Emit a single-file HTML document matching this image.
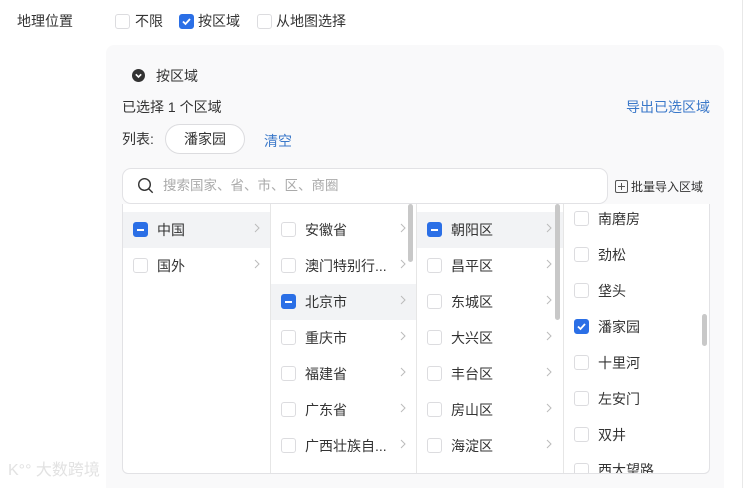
<!DOCTYPE html>
<html><head><meta charset="utf-8"><style>
*{box-sizing:border-box;margin:0;padding:0}
body{width:754px;height:488px;background:#fff;font-family:"Liberation Sans","Noto Sans CJK SC",sans-serif;font-size:14px;color:#333;position:relative;overflow:hidden}
.a{position:absolute;white-space:nowrap;line-height:18px}
.cb{position:absolute;width:15px;height:15px;border:1px solid #dcdcdf;border-radius:3px;background:#fff}
.cb.on{background:#2b6fe6;border-color:#2b6fe6}
.cb.ind{background:#2b6fe6;border-color:#2b6fe6}
.cb.ind::after{content:"";position:absolute;left:3px;top:6px;width:7px;height:2px;background:#fff}
.arr{position:absolute;width:6px;height:10px}
.hl{position:absolute;background:#f2f3f5}
.sb{position:absolute;width:5px;background:#c8c8c8;border-radius:3px}
</style></head><body>
<svg width="0" height="0" style="position:absolute"><defs><symbol id="ch" viewBox="0 0 6 10"><path d="M1 1l4 4-4 4" stroke="#bbb" stroke-width="1" fill="none"/></symbol></defs></svg>
<div class="a" style="left:17px;top:12px">地理位置</div>
<div class="cb" style="left:115px;top:14px"></div><div class="a" style="left:135px;top:12px">不限</div>
<div class="cb on" style="left:179px;top:14px"><svg width="13" height="13" viewBox="0 0 13 13" style="position:absolute;left:0;top:0"><path d="M3 6.5l2.5 2.5 4.5-5" stroke="#fff" stroke-width="1.8" fill="none"/></svg></div><div class="a" style="left:198px;top:12px">按区域</div>
<div class="cb" style="left:257px;top:14px"></div><div class="a" style="left:276px;top:12px">从地图选择</div>

<div class="a" style="left:106px;top:45px;width:618px;height:443px;background:#f9f9fa;border-radius:8px 8px 0 0"></div>
<div class="a" style="left:742px;top:0;width:1px;height:488px;background:#e8e8e8"></div>

<div class="a" style="left:132px;top:69px;width:13px;height:13px;border-radius:50%;background:#333"><svg width="13" height="13" style="position:absolute"><path d="M3.8 5.3l2.7 2.7 2.7-2.7" stroke="#fff" stroke-width="1.6" fill="none"/></svg></div>
<div class="a" style="left:156px;top:67px">按区域</div>
<div class="a" style="left:122px;top:98px">已选择 1 个区域</div>
<div class="a" style="left:626px;top:98px;color:#3a78c9">导出已选区域</div>
<div class="a" style="left:122px;top:130px">列表:</div>
<div class="a" style="left:165px;top:124px;width:80px;height:30px;border:1px solid #dcdcdf;border-radius:15px;background:#fff;text-align:center;line-height:28px">潘家园</div>
<div class="a" style="left:264px;top:132px;color:#3a78c9">清空</div>

<div class="a" style="left:122px;top:168px;width:486px;height:36px;border:1px solid #e2e2e5;border-radius:9px;background:#fff"></div>
<svg class="a" style="left:137px;top:177px" width="18" height="18"><circle cx="7.5" cy="7.5" r="5.8" stroke="#333" stroke-width="1.4" fill="none"/><path d="M11.7 11.7l4 4" stroke="#333" stroke-width="1.4"/></svg>
<div class="a" style="left:163px;top:177px;color:#aaa;font-size:13.5px">搜索国家、省、市、区、商圈</div>
<svg class="a" style="left:615px;top:180px" width="13" height="13"><rect x="0.5" y="0.5" width="12" height="12" rx="1.5" stroke="#555" fill="none"/><path d="M6.5 3v7M3 6.5h7" stroke="#555"/></svg>
<div class="a" style="left:631px;top:178px;font-size:12px">批量导入区域</div>

<div class="a" style="left:122px;top:204px;width:588px;height:270px;border:1px solid #e2e2e5;border-top:none;border-radius:0 0 6px 6px;background:#fff;overflow:hidden">
 <div class="a" style="left:147px;top:0;width:1px;height:270px;background:#e6e6e6"></div>
 <div class="a" style="left:293px;top:0;width:1px;height:270px;background:#e6e6e6"></div>
 <div class="a" style="left:440px;top:0;width:1px;height:270px;background:#e6e6e6"></div>
 <div class="hl" style="left:0;top:8px;width:147px;height:36px"></div>
 <div class="hl" style="left:148px;top:80px;width:145px;height:36px"></div>
 <div class="hl" style="left:294px;top:8px;width:146px;height:36px"></div>
</div>
<div class="sb" style="left:408px;top:204px;height:58px"></div>
<div class="sb" style="left:555px;top:204px;height:116px"></div>
<div class="sb" style="left:702px;top:314px;height:32px"></div>

<!-- col1 -->
<div class="cb ind" style="left:133px;top:222px"></div><div class="a" style="left:157px;top:221px">中国</div><svg class="arr" style="left:254px;top:223px"><use href="#ch"/></svg>
<div class="cb" style="left:133px;top:258px"></div><div class="a" style="left:157px;top:257px">国外</div><svg class="arr" style="left:254px;top:259px"><use href="#ch"/></svg>
<!-- col2 -->
<div class="cb" style="left:281px;top:222px"></div><div class="a" style="left:305px;top:221px">安徽省</div><svg class="arr" style="left:400px;top:223px"><use href="#ch"/></svg>
<div class="cb" style="left:281px;top:258px"></div><div class="a" style="left:305px;top:257px">澳门特别行...</div><svg class="arr" style="left:400px;top:259px"><use href="#ch"/></svg>
<div class="cb ind" style="left:281px;top:294px"></div><div class="a" style="left:305px;top:293px">北京市</div><svg class="arr" style="left:400px;top:295px"><use href="#ch"/></svg>
<div class="cb" style="left:281px;top:330px"></div><div class="a" style="left:305px;top:329px">重庆市</div><svg class="arr" style="left:400px;top:331px"><use href="#ch"/></svg>
<div class="cb" style="left:281px;top:366px"></div><div class="a" style="left:305px;top:365px">福建省</div><svg class="arr" style="left:400px;top:367px"><use href="#ch"/></svg>
<div class="cb" style="left:281px;top:402px"></div><div class="a" style="left:305px;top:401px">广东省</div><svg class="arr" style="left:400px;top:403px"><use href="#ch"/></svg>
<div class="cb" style="left:281px;top:438px"></div><div class="a" style="left:305px;top:437px">广西壮族自...</div><svg class="arr" style="left:400px;top:439px"><use href="#ch"/></svg>
<!-- col3 -->
<div class="cb ind" style="left:427px;top:222px"></div><div class="a" style="left:451px;top:221px">朝阳区</div><svg class="arr" style="left:546px;top:223px"><use href="#ch"/></svg>
<div class="cb" style="left:427px;top:258px"></div><div class="a" style="left:451px;top:257px">昌平区</div><svg class="arr" style="left:546px;top:259px"><use href="#ch"/></svg>
<div class="cb" style="left:427px;top:294px"></div><div class="a" style="left:451px;top:293px">东城区</div><svg class="arr" style="left:546px;top:295px"><use href="#ch"/></svg>
<div class="cb" style="left:427px;top:330px"></div><div class="a" style="left:451px;top:329px">大兴区</div><svg class="arr" style="left:546px;top:331px"><use href="#ch"/></svg>
<div class="cb" style="left:427px;top:366px"></div><div class="a" style="left:451px;top:365px">丰台区</div><svg class="arr" style="left:546px;top:367px"><use href="#ch"/></svg>
<div class="cb" style="left:427px;top:402px"></div><div class="a" style="left:451px;top:401px">房山区</div><svg class="arr" style="left:546px;top:403px"><use href="#ch"/></svg>
<div class="cb" style="left:427px;top:438px"></div><div class="a" style="left:451px;top:437px">海淀区</div><svg class="arr" style="left:546px;top:439px"><use href="#ch"/></svg>
<!-- col4 -->
<div class="cb" style="left:574px;top:211px"></div><div class="a" style="left:598px;top:210px">南磨房</div>
<div class="cb" style="left:574px;top:247px"></div><div class="a" style="left:598px;top:246px">劲松</div>
<div class="cb" style="left:574px;top:283px"></div><div class="a" style="left:598px;top:282px">垡头</div>
<div class="cb on" style="left:574px;top:319px"><svg width="13" height="13" style="position:absolute"><path d="M3 6.5l2.5 2.5 4.5-5" stroke="#fff" stroke-width="1.8" fill="none"/></svg></div><div class="a" style="left:598px;top:318px">潘家园</div>
<div class="cb" style="left:574px;top:355px"></div><div class="a" style="left:598px;top:354px">十里河</div>
<div class="cb" style="left:574px;top:391px"></div><div class="a" style="left:598px;top:390px">左安门</div>
<div class="cb" style="left:574px;top:427px"></div><div class="a" style="left:598px;top:426px">双井</div>
<div style="position:absolute;left:563px;top:455px;width:140px;height:18px;overflow:hidden"><div class="cb" style="left:11px;top:8px"></div><div class="a" style="left:35px;top:6px">西大望路</div></div>

<div class="a" style="left:8px;top:462px;color:#e2e2e2;font-size:16px">K°° 大数跨境</div>
</body></html>
